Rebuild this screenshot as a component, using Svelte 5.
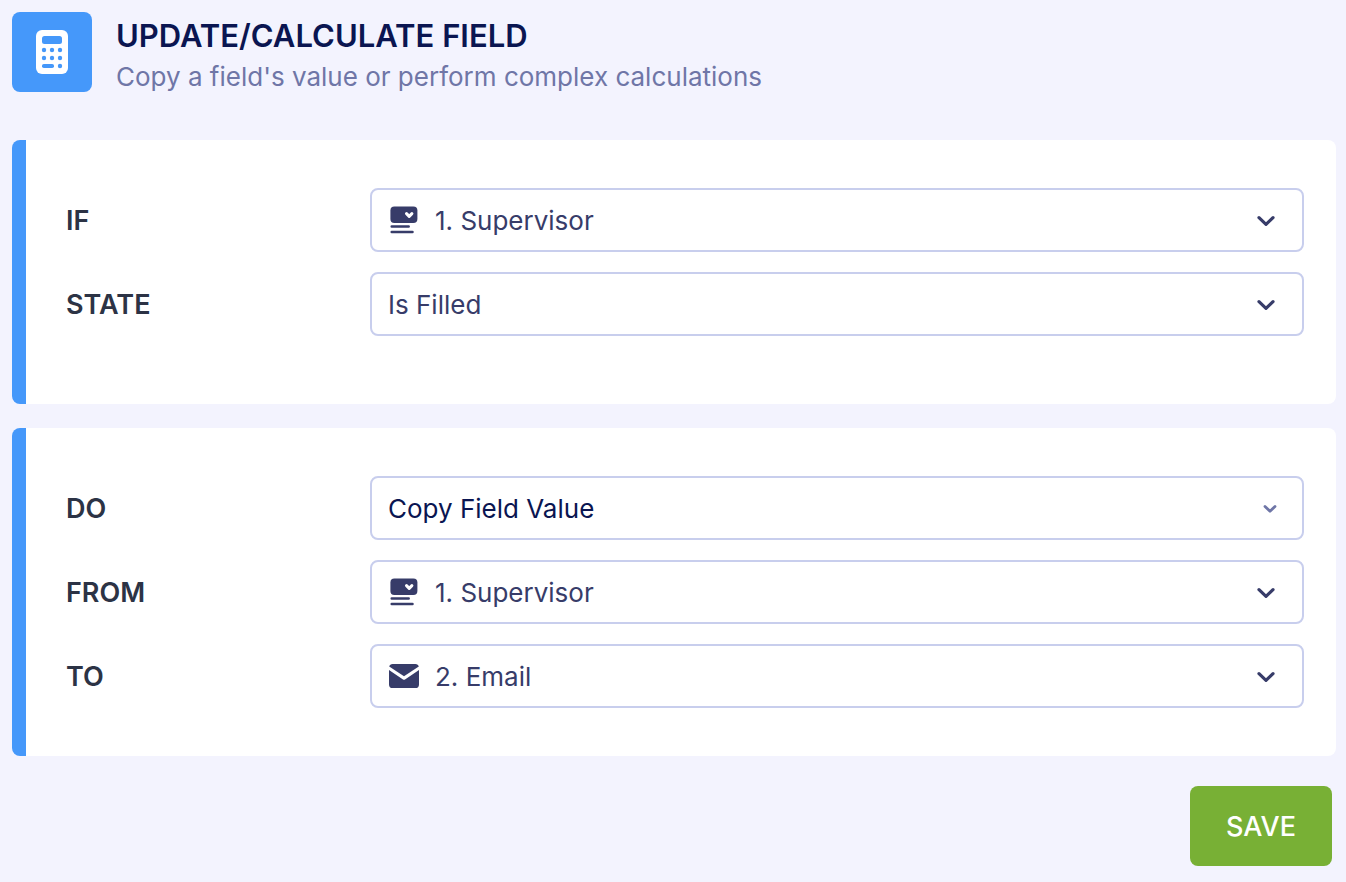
<script>
  const groups = [
    {
      name: 'condition',
      rows: [
        { id: 'if', label: 'IF', icon: 'dropdown', options: ['1. Supervisor', '2. Email'] },
        { id: 'state', label: 'STATE', options: ['Is Filled', 'Is Empty'] }
      ]
    },
    {
      name: 'action',
      rows: [
        { id: 'do', label: 'DO', subtle: true, options: ['Copy Field Value', 'Calculate Field Value'] },
        { id: 'from', label: 'FROM', icon: 'dropdown', options: ['1. Supervisor', '2. Email'] },
        { id: 'to', label: 'TO', icon: 'email', options: ['2. Email', '1. Supervisor'] }
      ]
    }
  ];
</script>

<main>
  <header>
    <div class="badge">
      <svg width="32" height="44" viewBox="0 0 32 44" aria-hidden="true">
        <rect width="32" height="44" rx="6" fill="#fff" />
        <g fill="#4598fa">
          <rect x="6" y="6" width="20" height="8" rx="2.5" />
          {#each [8, 16, 24] as cx}
            <circle {cx} cy="20" r="2.2" />
            <circle {cx} cy="28" r="2.2" />
          {/each}
          <rect x="6" y="34" width="12" height="4" rx="1.8" />
          <circle cx="24" cy="36" r="2.2" />
        </g>
      </svg>
    </div>
    <div class="titles">
      <h1>UPDATE/CALCULATE FIELD</h1>
      <p>Copy a field's value or perform complex calculations</p>
    </div>
  </header>

  <form onsubmit={(e) => e.preventDefault()}>
    {#each groups as group}
      <section class={group.name}>
        {#each group.rows as row}
          <div class="row">
            <label for={row.id}>{row.label}</label>
            <div class="field" class:subtle={row.subtle} class:with-icon={row.icon}>
              <select id={row.id}>
                {#each row.options as option}
                  <option>{option}</option>
                {/each}
              </select>
              {#if row.icon === 'dropdown'}
                <svg class="icon" width="32" height="32" viewBox="0 0 32 32" aria-hidden="true">
                  <rect x="2.4" y="2.6" width="27" height="16.4" rx="4" fill="#373c69" />
                  <path d="M18.5 9.6l2.7 2.8 2.7-2.8" fill="none" stroke="#fff" stroke-width="3" stroke-linecap="round" stroke-linejoin="round" />
                  <path d="M3.7 22.6h17M3.7 28h20.8" stroke="#373c69" stroke-width="2.5" stroke-linecap="round" />
                </svg>
              {:else if row.icon === 'email'}
                <svg class="icon" width="32" height="32" viewBox="0 0 32 32" aria-hidden="true">
                  <path d="M1.2 6.6C1.600 5 2.800 4 4.600 4h22.800c1.800 0 3 1 3.400 2.600L16 16.200z" fill="#373c69" />
                  <path d="M1 10l14 9.500q1 .6 2 0l14-9.500v14.400q0 3.600-3.600 3.600H4.600Q1 28 1 24.400z" fill="#373c69" />
                </svg>
              {/if}
              {#if row.subtle}
                <svg class="chevron" width="14" height="10" viewBox="0 0 14 10" aria-hidden="true">
                  <path d="M2 2.5l5 4.700 5-4.700" />
                </svg>
              {:else}
                <svg class="chevron" width="18" height="12" viewBox="0 0 18 12" aria-hidden="true">
                  <path d="M2 2.7l7 6.700 7-6.700" />
                </svg>
              {/if}
            </div>
          </div>
        {/each}
      </section>
    {/each}
    <button type="submit">SAVE</button>
  </form>
</main>

<style>
  :global(body) {
    margin: 0;
    background: #f3f3fe;
  }
  main {
    box-sizing: border-box;
    padding: 12px 10px 16px 12px;
    font-family: Inter, 'Liberation Sans', sans-serif;
  }
  header {
    display: flex;
    align-items: flex-start;
    gap: 24px;
    margin-bottom: 48px;
  }
  .badge {
    display: grid;
    place-items: center;
    flex: none;
    width: 80px;
    height: 80px;
    border-radius: 8px;
    background: #4598fa;
  }
  .titles {
    display: flex;
    flex-direction: column;
    gap: 6px;
    padding-top: 4px;
  }
  h1,
  p {
    margin: 0;
  }
  h1 {
    font-size: 31px;
    line-height: 40px;
    font-weight: 600;
    color: #0a1551;
  }
  p {
    font-size: 26px;
    line-height: 30px;
    color: #6f76a7;
  }
  form {
    display: flex;
    flex-direction: column;
    gap: 24px;
  }
  section {
    display: flex;
    flex-direction: column;
    gap: 20px;
    padding: 48px 32px 48px 40px;
    border-left: 14px solid #4598fa;
    border-radius: 8px;
    background: #fff;
  }
  .condition {
    padding-bottom: 68px;
  }
  .row {
    display: grid;
    grid-template-columns: 304px minmax(0, 1fr);
    align-items: center;
  }
  label {
    font-size: 27px;
    font-weight: 600;
    color: #2c3345;
  }
  .field {
    display: grid;
    align-items: center;
    color: #373c69;
  }
  .field > * {
    grid-area: 1 / 1;
  }
  select {
    box-sizing: border-box;
    width: 100%;
    height: 64px;
    padding: 0 64px 0 16px;
    border: 2px solid #c8ceed;
    border-radius: 8px;
    background: #fff;
    color: inherit;
    font: inherit;
    font-size: 26px;
    appearance: none;
    cursor: pointer;
  }
  .with-icon select {
    padding-left: 63px;
  }
  .icon {
    margin-left: 18px;
    pointer-events: none;
  }
  .chevron {
    justify-self: end;
    margin: 2px 29px 0 0;
    fill: none;
    stroke: #373c69;
    stroke-width: 3.2;
    stroke-linecap: round;
    stroke-linejoin: round;
    pointer-events: none;
  }
  .subtle {
    color: #0a1551;
  }
  .subtle .chevron {
    margin-right: 27px;
    stroke: #6f76a7;
    stroke-width: 2.8;
  }
  button {
    align-self: flex-end;
    height: 80px;
    margin: 6px 4px 0 0;
    padding: 0 36px;
    border: 0;
    border-radius: 8px;
    background: #78b035;
    color: #fff;
    font: inherit;
    font-size: 27px;
    font-weight: 500;
    cursor: pointer;
  }
</style>
